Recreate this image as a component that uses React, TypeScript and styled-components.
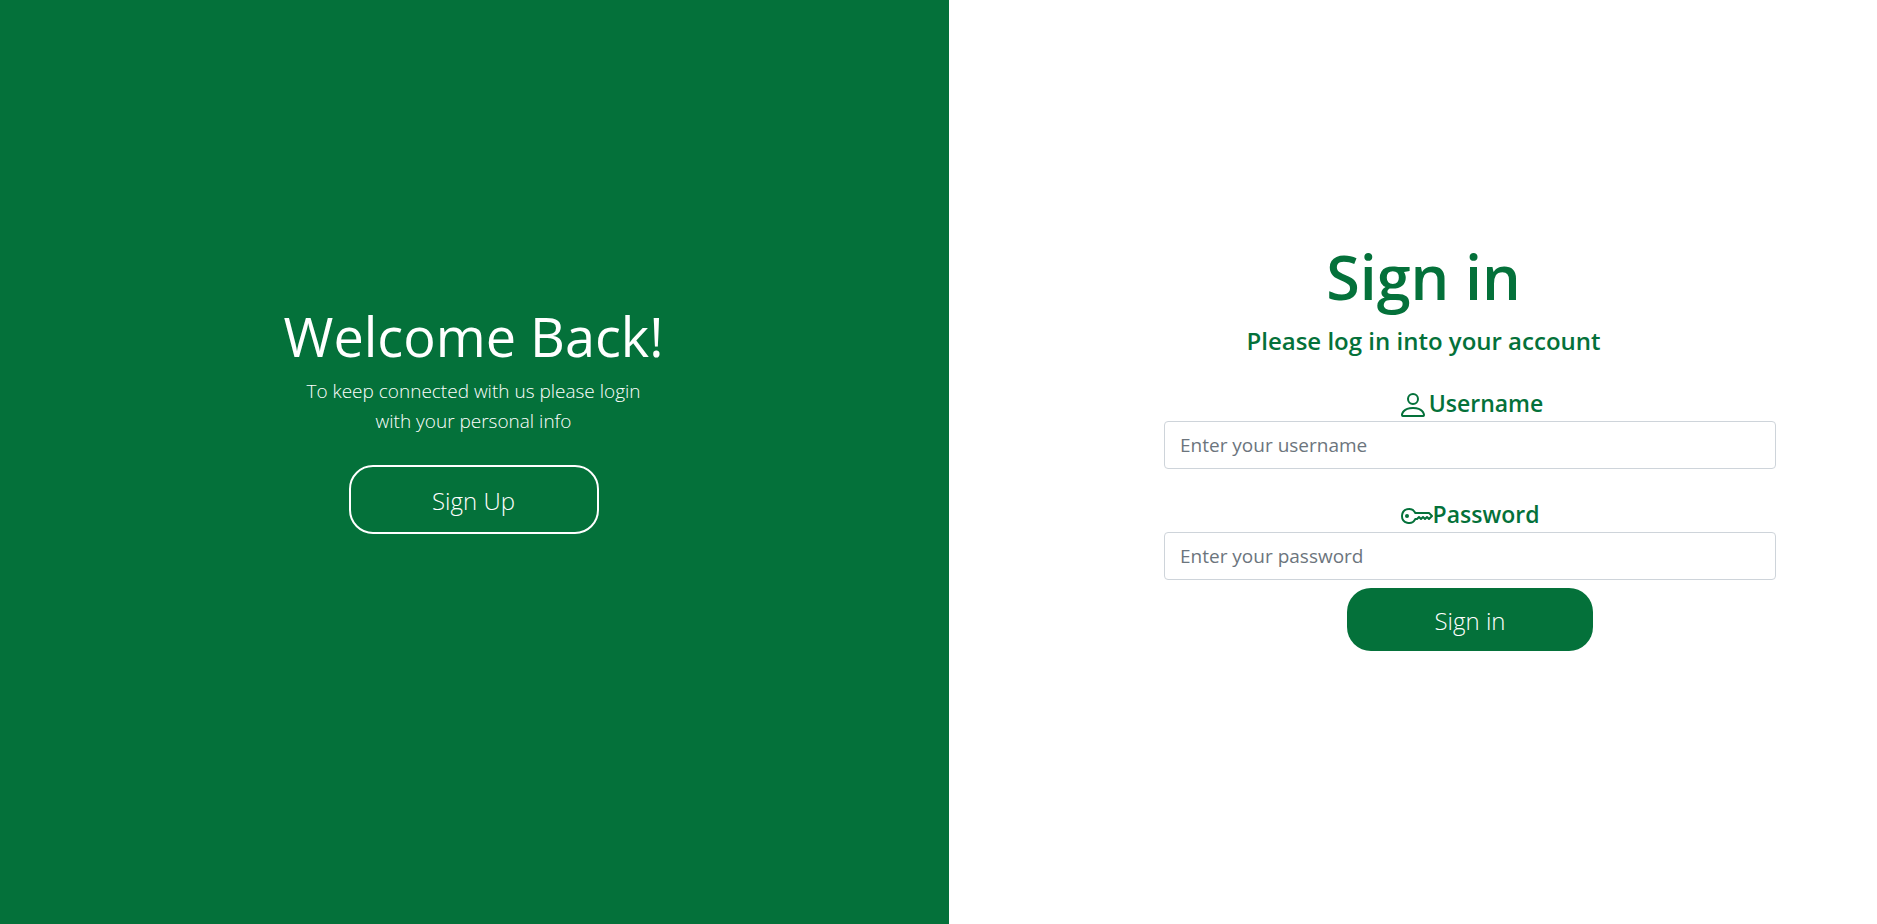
import React from "react";
import styled, { createGlobalStyle } from "styled-components";
import { BsPerson, BsKey } from "react-icons/bs";

const green = "#04713a";

const GlobalStyle = createGlobalStyle`
  *, *::before, *::after { box-sizing: border-box; }
  body { margin: 0; background: #fff; font-family: "Segoe UI", "Open Sans", "Noto Sans", sans-serif; line-height: 1.5; }
  h1, h2, p { margin: 0; }
`;

const Page = styled.main`
  display: grid;
  grid-template-columns: 949fr 928fr;
  min-height: 100vh;
`;

const Welcome = styled.section`
  display: flex;
  flex-direction: column;
  align-items: center;
  justify-content: center;
  padding: 0 2px 86px 0;
  background: ${green};
  color: #fff;
  text-align: center;
`;

const WelcomeTitle = styled.h1`
  font-size: 54px;
  line-height: 64px;
  font-weight: 400;
`;

const WelcomeText = styled.p`
  width: 360px;
  margin: 8px 0 29px;
  font-size: 19px;
  line-height: 30px;
  font-weight: 300;
`;

const PillButton = styled.button<{ $outlined?: boolean }>`
  width: ${(p) => (p.$outlined ? 250 : 246)}px;
  height: ${(p) => (p.$outlined ? 69 : 63)}px;
  padding: 2px 0 0;
  border: ${(p) => (p.$outlined ? "2px solid #fff" : "0")};
  border-radius: 24px;
  background: ${green};
  color: #fff;
  font-family: inherit;
  font-size: 24px;
  font-weight: 300;
  cursor: pointer;
`;

const Login = styled.section`
  display: flex;
  flex-direction: column;
  justify-content: center;
  padding-bottom: 35px;
  color: ${green};
`;

const Heading = styled.header`
  padding-left: 21px;
  text-align: center;
`;

const Title = styled.h1`
  font-size: 61px;
  line-height: 77px;
  font-weight: 600;
`;

const Subtitle = styled.h2`
  margin-top: 8px;
  font-size: 24px;
  line-height: 36px;
  font-weight: 600;
`;

const Form = styled.form`
  display: flex;
  flex-direction: column;
  align-items: center;
  gap: 27px;
  margin: 26px 101px 0 215px;
`;

const Field = styled.div`
  width: 100%;
`;

const Actions = styled.div`
  display: flex;
  flex-direction: column;
  align-items: center;
  gap: 8px;
  width: 100%;
`;

const Label = styled.label`
  display: flex;
  align-items: center;
  justify-content: center;
  font-size: 23px;
  line-height: 36px;
  font-weight: 600;

  svg { margin-top: 4px; }
`;

const Input = styled.input`
  display: block;
  width: 100%;
  height: 48px;
  padding: 8px 15px;
  border: 1px solid #ced4da;
  border-radius: 4px;
  font-family: inherit;
  font-size: 19px;
  &::placeholder { color: #6c757d; opacity: 1; }
`;

export default function App() {
  return (
    <>
      <GlobalStyle />
      <Page>
        <Welcome>
          <WelcomeTitle>Welcome Back!</WelcomeTitle>
          <WelcomeText>To keep connected with us please login with your personal info</WelcomeText>
          <PillButton $outlined type="button">Sign Up</PillButton>
        </Welcome>
        <Login>
          <Heading>
            <Title>Sign in</Title>
            <Subtitle>Please log in into your account</Subtitle>
          </Heading>
          <Form>
            <Field>
              <Label htmlFor="username"><BsPerson size={32} />Username</Label>
              <Input id="username" placeholder="Enter your username" />
            </Field>
            <Actions>
              <Field>
                <Label htmlFor="password"><BsKey size={32} />Password</Label>
                <Input id="password" type="password" placeholder="Enter your password" />
              </Field>
              <PillButton type="submit">Sign in</PillButton>
            </Actions>
          </Form>
        </Login>
      </Page>
    </>
  );
}
